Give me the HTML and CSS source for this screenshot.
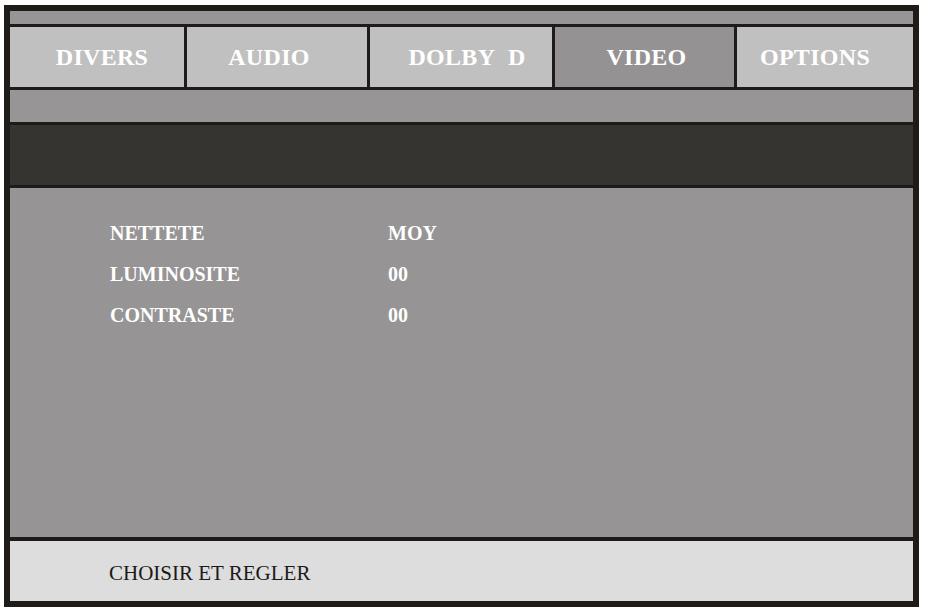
FILE: index.html
```html
<!DOCTYPE html>
<html lang="fr">
<head>
<meta charset="utf-8">
<title>Menu VIDEO</title>
<link rel="stylesheet" href="styles.css">
</head>
<body>
<div class="screen">
  <div class="strip-top"></div>
  <div class="tabs">
    <div class="tab tab-divers">DIVERS</div>
    <div class="tab tab-audio">AUDIO</div>
    <div class="tab tab-dolby">DOLBY&nbsp; D</div>
    <div class="tab tab-video active">VIDEO</div>
    <div class="tab tab-options">OPTIONS</div>
  </div>
  <div class="strip-mid"></div>
  <div class="panel"></div>
  <div class="content">
    <div class="row"><span class="label">NETTETE</span><span class="value">MOY</span></div>
    <div class="row"><span class="label">LUMINOSITE</span><span class="value">00</span></div>
    <div class="row"><span class="label">CONTRASTE</span><span class="value">00</span></div>
  </div>
  <div class="footer">CHOISIR ET REGLER</div>
</div>
</body>
</html>
```

FILE: styles.css
```css
html, body {
  margin: 0;
  padding: 0;
  background: #ffffff;
}

body {
  font-family: "Liberation Serif", "DejaVu Serif", serif;
}

.screen {
  margin: 5px 0 0 4px;
  width: 903px;
  border: 6px solid #1e1b19;
  background: #969495;
  display: flex;
  flex-direction: column;
}

.strip-top {
  height: 13px;
  background: #979595;
  border-bottom: 3px solid #1e1b19;
}

.tabs {
  display: flex;
  height: 60px;
  border-bottom: 3px solid #1e1b19;
}

.tab {
  box-sizing: border-box;
  background: #c1c0c0;
  color: #ffffff;
  font-weight: bold;
  font-size: 24px;
  letter-spacing: 0.3px;
  line-height: 60px;
  text-align: center;
  white-space: nowrap;
}

.tab + .tab {
  border-left: 3px solid #1e1b19;
}

.tab-divers {
  width: 174px;
  padding-left: 10px;
}

.tab-audio {
  width: 183px;
  padding-right: 16px;
}

.tab-dolby {
  width: 185px;
  padding-left: 12px;
}

.tab-video {
  width: 182px;
  padding-left: 4px;
}

.tab-options {
  flex: 1 1 0;
  border-left-width: 2px;
  padding-right: 20px;
}

.tab.active {
  background: #949292;
}

.strip-mid {
  height: 32px;
  background: #979595;
  border-bottom: 3px solid #1e1b19;
}

.panel {
  height: 60px;
  background: #363431;
  border-bottom: 3px solid #1e1b19;
}

.content {
  height: 324px;
  padding: 25px 0 0 100px;
  background: #969495;
  border-bottom: 4px solid #1e1b19;
  color: #ffffff;
  font-weight: bold;
  font-size: 20px;
}

.row {
  display: flex;
  line-height: 41px;
  height: 41px;
}

.label {
  width: 278px;
}

.footer {
  height: 58px;
  padding: 2px 0 0 99px;
  background: #dedddd;
  color: #1a1a1a;
  font-size: 21px;
  line-height: 60px;
}
```
